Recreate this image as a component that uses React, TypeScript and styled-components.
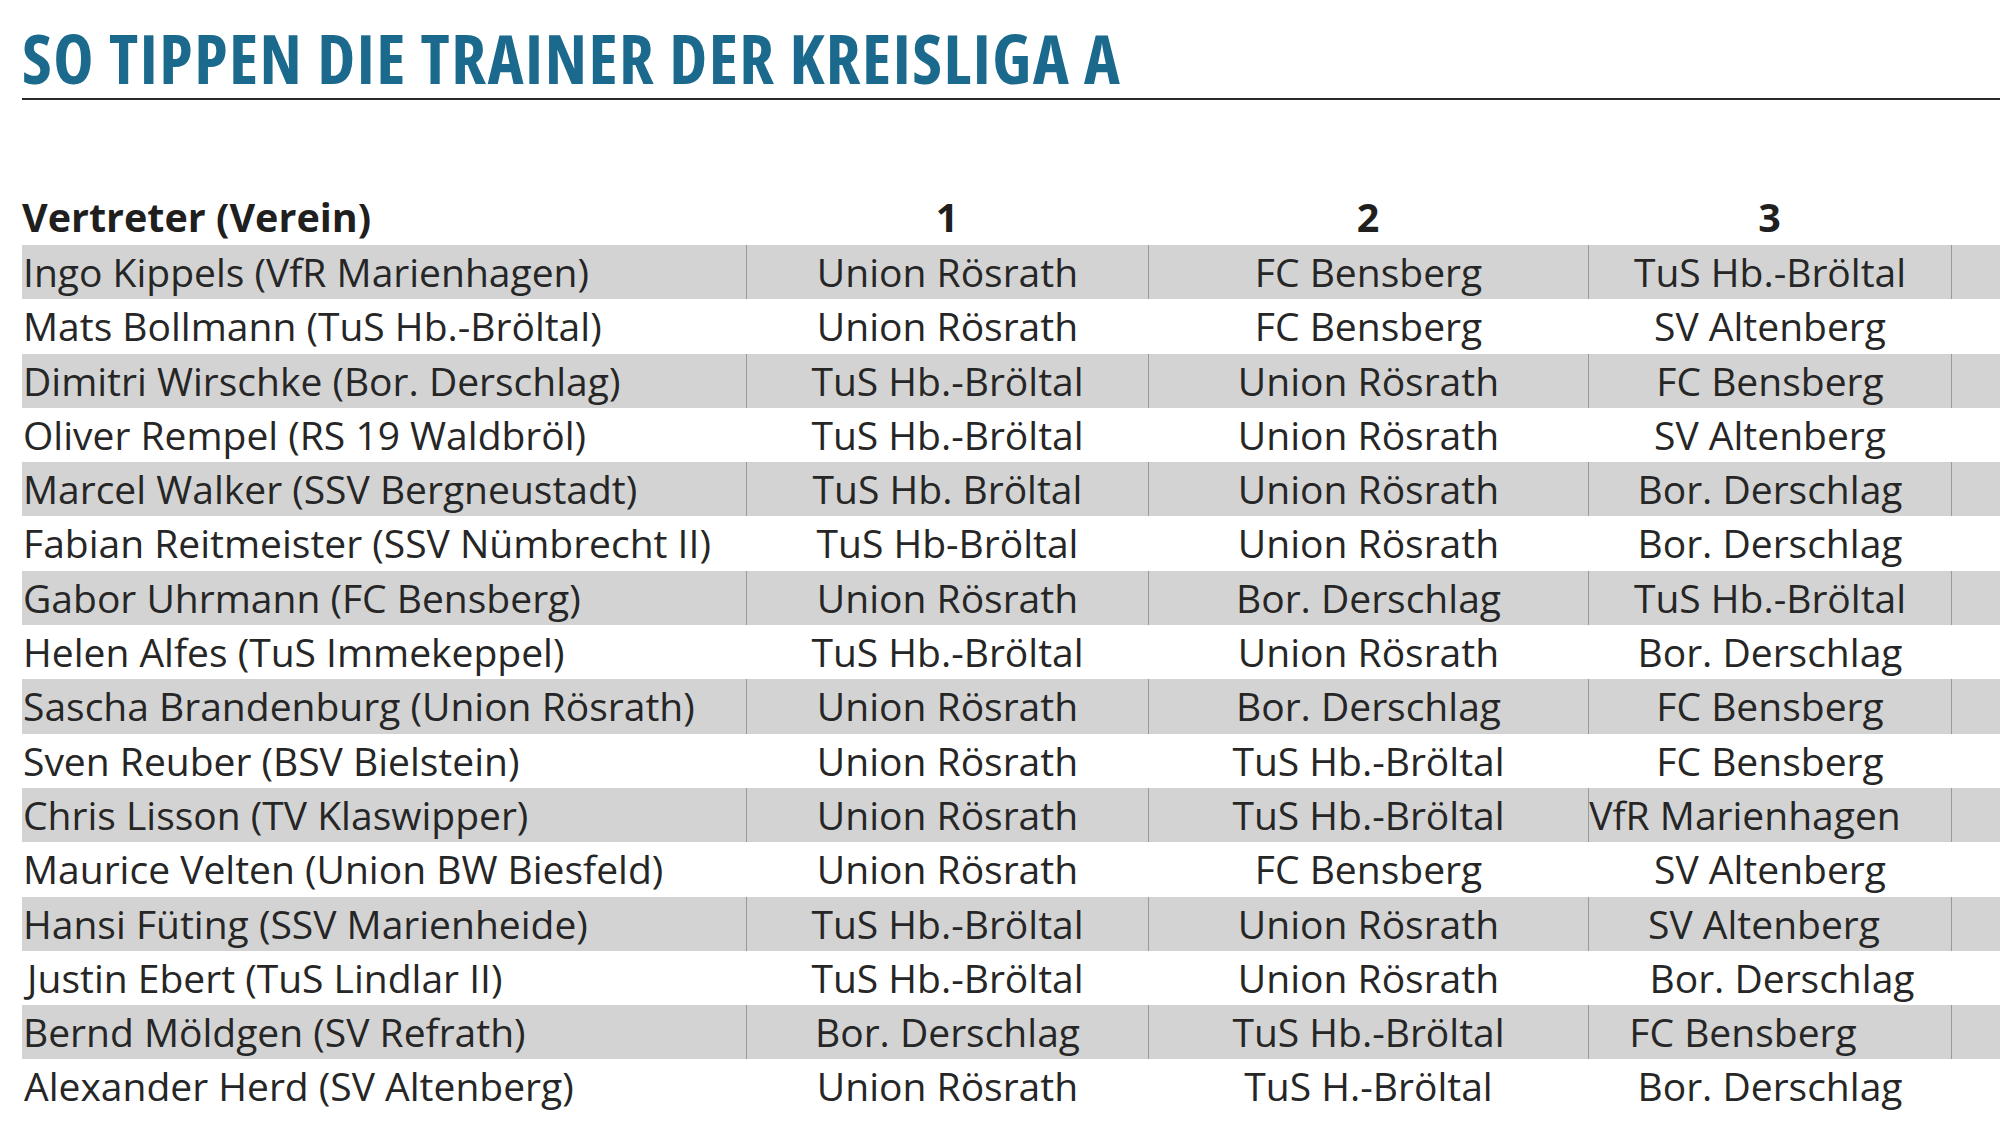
import React from "react";
import styled, { createGlobalStyle } from "styled-components";

const Global = createGlobalStyle`
  html, body { margin: 0; padding: 0; background: #ffffff; }
  body { font-family: "Open Sans", "Noto Sans", sans-serif; color: #222; overflow: hidden; }
`;

const Page = styled.div`
  width: 2000px;
  height: 1124px;
  overflow: hidden;
  padding-left: 22px;
  box-sizing: border-box;
`;

const Title = styled.h1`
  margin: 0;
  padding-top: 20px;
  font-family: "Open Sans", sans-serif;
  font-weight: 700;
  font-stretch: 75%;
  font-size: 68px;
  line-height: 76px;
  height: 78px;
  color: #1b6a8e;
  letter-spacing: 1.55px;
  white-space: nowrap;
`;

const Rule = styled.div`
  height: 2px;
  background: #2a2a2a;
  margin-right: -40px;
`;

const Table = styled.div`
  margin-top: 95px;
  display: grid;
  grid-template-columns: 724px 402px 440px 363px 1fr;
  margin-right: -40px;
`;

const HeadCell = styled.div<{ $center?: boolean }>`
  height: 50px;
  font-weight: 700;
  font-stretch: 100%;
  font-size: 39.5px;
  line-height: 45px;
  text-align: ${(p) => (p.$center ? "center" : "left")};
  white-space: nowrap;
  color: #1f1f1f;
`;

const Cell = styled.div<{ $gray: boolean; $center?: boolean; $divider?: boolean }>`
  height: 54.3px;
  box-sizing: border-box;
  background: ${(p) => (p.$gray ? "#d3d3d3" : "#ffffff")};
  border-left: ${(p) => (p.$divider && p.$gray ? "1px solid #9a9a9a" : "1px solid transparent")};
  font-weight: 400;
  font-stretch: 100%;
  font-size: 39px;
  line-height: 54px;
  text-align: ${(p) => (p.$center ? "center" : "left")};
  white-space: nowrap;
  color: #262626;
`;

const Shift = styled.span`
  position: relative;
`;

type Row = { name: string; picks: [string, string, string]; nameShift?: number; shift3?: number };

const rows: Row[] = [
  { name: "Ingo Kippels (VfR Marienhagen)", picks: ["Union Rösrath", "FC Bensberg", "TuS Hb.-Bröltal"] },
  { name: "Mats Bollmann (TuS Hb.-Bröltal)", picks: ["Union Rösrath", "FC Bensberg", "SV Altenberg"] },
  { name: "Dimitri Wirschke (Bor. Derschlag)", picks: ["TuS Hb.-Bröltal", "Union Rösrath", "FC Bensberg"] },
  { name: "Oliver Rempel (RS 19 Waldbröl)", picks: ["TuS Hb.-Bröltal", "Union Rösrath", "SV Altenberg"] },
  { name: "Marcel Walker (SSV Bergneustadt)", picks: ["TuS Hb. Bröltal", "Union Rösrath", "Bor. Derschlag"] },
  { name: "Fabian Reitmeister (SSV Nümbrecht II)", picks: ["TuS Hb-Bröltal", "Union Rösrath", "Bor. Derschlag"] },
  { name: "Gabor Uhrmann (FC Bensberg)", picks: ["Union Rösrath", "Bor. Derschlag", "TuS Hb.-Bröltal"] },
  { name: "Helen Alfes (TuS Immekeppel)", picks: ["TuS Hb.-Bröltal", "Union Rösrath", "Bor. Derschlag"] },
  { name: "Sascha Brandenburg (Union Rösrath)", picks: ["Union Rösrath", "Bor. Derschlag", "FC Bensberg"] },
  { name: "Sven Reuber (BSV Bielstein)", picks: ["Union Rösrath", "TuS Hb.-Bröltal", "FC Bensberg"] },
  { name: "Chris Lisson (TV Klaswipper)", picks: ["Union Rösrath", "TuS Hb.-Bröltal", "VfR Marienhagen"], shift3: -25 },
  { name: "Maurice Velten (Union BW Biesfeld)", picks: ["Union Rösrath", "FC Bensberg", "SV Altenberg"] },
  { name: "Hansi Füting (SSV Marienheide)", picks: ["TuS Hb.-Bröltal", "Union Rösrath", "SV Altenberg"], shift3: -6 },
  { name: "Justin Ebert (TuS Lindlar II)", picks: ["TuS Hb.-Bröltal", "Union Rösrath", "Bor. Derschlag"], nameShift: 4, shift3: 12 },
  { name: "Bernd Möldgen (SV Refrath)", picks: ["Bor. Derschlag", "TuS Hb.-Bröltal", "FC Bensberg"], shift3: -27 },
  { name: "Alexander Herd (SV Altenberg)", picks: ["Union Rösrath", "TuS H.-Bröltal", "Bor. Derschlag"], nameShift: 1 },
];

export default function App() {
  return (
    <Page>
      <Global />
      <Title>SO TIPPEN DIE TRAINER DER KREISLIGA A</Title>
      <Rule />
      <Table>
        <HeadCell>Vertreter (Verein)</HeadCell>
        <HeadCell $center>1</HeadCell>
        <HeadCell $center>2</HeadCell>
        <HeadCell $center>3</HeadCell>
        <HeadCell />
        {rows.map((r, i) => {
          const gray = i % 2 === 0;
          return (
            <React.Fragment key={r.name}>
              <Cell $gray={gray}>
                <Shift style={r.nameShift ? { left: r.nameShift } : undefined}>{r.name}</Shift>
              </Cell>
              <Cell $gray={gray} $center $divider>{r.picks[0]}</Cell>
              <Cell $gray={gray} $center $divider>{r.picks[1]}</Cell>
              <Cell $gray={gray} $center $divider>
                <Shift style={r.shift3 ? { left: r.shift3 } : undefined}>{r.picks[2]}</Shift>
              </Cell>
              <Cell $gray={gray} $divider />
            </React.Fragment>
          );
        })}
      </Table>
    </Page>
  );
}
